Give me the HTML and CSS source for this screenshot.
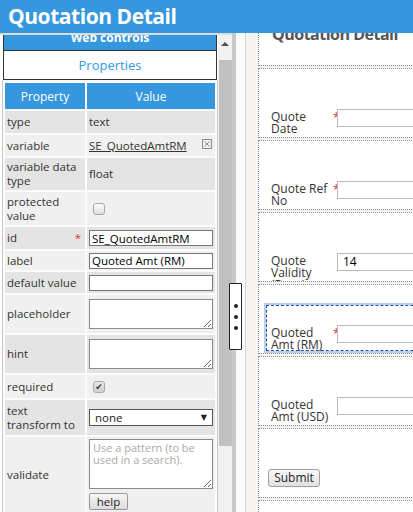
FILE: index.html
```html
<!DOCTYPE html>
<html>
<head>
<meta charset="utf-8">
<title>Quotation Detail</title>
<link rel="stylesheet" href="styles.css">
</head>
<body>
<header class="topbar">Quotation Detail</header>
<div class="main">
  <aside class="left">
    <div class="left-content">
      <div class="webctl">Web controls</div>
      <div class="props-tab">Properties</div>
      <div class="table-wrap">
        <table class="props">
          <colgroup><col class="c1"><col class="c2"></colgroup>
          <tr class="head"><th>Property</th><th>Value</th></tr>
          <tr class="d r-type"><td>type</td><td>text</td></tr>
          <tr class="l r-var"><td>variable</td><td><div class="var"><a class="link">SE_QuotedAmtRM</a><svg class="xicon" width="10" height="10" viewBox="0 0 10 10"><rect x="0.5" y="0.5" width="9" height="9" fill="none" stroke="#8a8a8a"/><path d="M2.5 2.5L7.5 7.5M7.5 2.5L2.5 7.5" stroke="#8a8a8a" fill="none"/></svg></div></td></tr>
          <tr class="d r-vdt"><td>variable data type</td><td>float</td></tr>
          <tr class="l r-prot"><td>protected value</td><td><span class="cb"></span></td></tr>
          <tr class="d r-id"><td><span class="star">*</span>id</td><td><input class="tin" type="text" value="SE_QuotedAmtRM"></td></tr>
          <tr class="l r-label"><td>label</td><td><input class="tin" type="text" value="Quoted Amt (RM)"></td></tr>
          <tr class="d r-def"><td>default value</td><td><input class="tin" type="text" value=""></td></tr>
          <tr class="l r-ph"><td>placeholder</td><td><textarea class="ta"></textarea></td></tr>
          <tr class="d r-hint"><td>hint</td><td><textarea class="ta"></textarea></td></tr>
          <tr class="l r-req"><td>required</td><td><span class="cb on">&#10004;</span></td></tr>
          <tr class="d r-tt"><td>text transform to</td><td><div class="sel"><span>none</span><span class="arr">&#9660;</span></div></td></tr>
          <tr class="l r-val"><td>validate</td><td class="valcell"><textarea class="ta big" placeholder="Use a pattern (to be used in a search)."></textarea><div class="help">help</div></td></tr>
        </table>
      </div>
    </div>
    <div class="vscroll"><div class="arrow-area"><span class="arrow"></span></div><div class="thumb"></div></div>
  </aside>
  <div class="splitter">
    <div class="handle"><i></i><i></i><i></i></div>
  </div>
  <section class="right">
    <div class="form">
      <div class="sec title-sec"><h2>Quotation Detail</h2></div>
      <div class="sec"><div class="fld"><label>Quote Date</label><span class="req">*</span><div class="fi"></div></div></div>
      <div class="sec"><div class="fld"><label>Quote Ref No</label><span class="req">*</span><div class="fi"></div></div></div>
      <div class="sec"><div class="fld"><label>Quote Validity (Days)</label><span class="req"></span><div class="fi">14</div></div></div>
      <div class="sec"><div class="fld selected"><label>Quoted Amt (RM)</label><span class="req">*</span><div class="fi"></div></div></div>
      <div class="sec"><div class="fld"><label>Quoted Amt (USD)</label><span class="req"></span><div class="fi"></div></div></div>
      <div class="sec"><div class="btn">Submit</div></div>
      <div class="sec"></div>
    </div>
  </section>
</div>
</body>
</html>
```
FILE: styles.css
```css
* { box-sizing: border-box; }
html, body { margin: 0; padding: 0; }
body {
  width: 413px;
  height: 512px;
  overflow: hidden;
  font-family: "Open Sans", "Liberation Sans", sans-serif;
  color: #333;
  background: #fff;
}
.topbar {
  position: relative;
  z-index: 2;
  height: 33px;
  background: #3597dd;
  color: #fff;
  font-weight: 700;
  font-size: 21px;
  letter-spacing: -0.45px;
  line-height: 33px;
  padding-left: 8px;
}
.main {
  display: flex;
  height: 479px;
  overflow: hidden;
}
/* left panel */
.left {
  display: flex;
  width: 232px;
  flex: none;
  border-top: 2px solid #dcdcdc;
}
.left-content {
  width: 218px;
  overflow: hidden;
}
.webctl {
  margin: -10px 0 0 3px;
  width: 214px;
  height: 26px;
  background: #3597dd;
  border: 1px solid #333;
  border-top: none;
  color: #fff;
  font-weight: 700;
  font-size: 12px;
  line-height: 26px;
  text-align: center;
}
.props-tab {
  margin-left: 3px;
  width: 214px;
  height: 29px;
  border: 1px solid #333;
  border-top: none;
  background: #fff;
  color: #3597dd;
  font-size: 13px;
  line-height: 28px;
  text-align: center;
}
.table-wrap {
  margin-left: 2px;
  width: 216px;
  border-left: 1px solid #c8c8c8;
  border-right: 1px solid #c8c8c8;
  padding-top: 1px;
  background: #fbfbfb;
}
table.props {
  border-collapse: separate;
  border-spacing: 2px;
  width: 214px;
  table-layout: fixed;
  font-size: 11.5px;
  color: #333;
}
col.c1 { width: 80px; }
col.c2 { width: 128px; }
.props th {
  background: #3597dd;
  color: #fff;
  font-weight: 400;
  font-size: 12px;
  height: 26px;
  padding: 0;
}
.props td {
  padding: 0 0 0 2px;
  vertical-align: middle;
  line-height: 14px;
}
.props td:first-child { padding-right: 4px; }
.props tr.d td { background: #e4e4e4; }
.props tr.l td { background: #f0f0f0; }
.r-type td { height: 22px; }
.r-var td { height: 21px; }
.r-vdt td { height: 32px; }
.r-prot td { height: 33px; }
.r-id td { height: 22px; }
.r-label td { height: 19px; }
.r-def td { height: 21px; }
.r-ph td { height: 38px; }
.r-hint td { height: 38px; }
.r-req td { height: 23px; }
.r-tt td { height: 35px; }
.props td.valcell { padding-top: 2px; padding-bottom: 2px; }
.star {
  float: right;
  color: #e8303a;
  margin-right: 0;
}
.var {
  display: flex;
  justify-content: space-between;
  align-items: center;
  padding-right: 3px;
}
.link {
  color: #333;
  text-decoration: underline;
}
.xicon { display: block; margin-top: -4px; }
.tin {
  display: block;
  width: 124px;
  height: 16px;
  margin: 0;
  border: 1px solid #777;
  padding: 0 2px;
  font-family: "Open Sans", sans-serif;
  font-size: 11.5px;
  line-height: 14px;
  color: #000;
  background: #fff;
  outline: none;
}
.ta {
  display: block;
  width: 124px;
  height: 30px;
  margin: 0;
  border: 1px solid #8a8a8a;
  padding: 2px 3px;
  font-family: "Open Sans", sans-serif;
  font-size: 11px;
  line-height: 12px;
  background: #fff;
}
.ta.big { height: 50px; }
.ta::placeholder { color: #a9a9a9; }
.help {
  margin-top: 4px;
  width: 39px;
  height: 17px;
  border: 1px solid #999;
  border-radius: 2px;
  background: linear-gradient(#f7f7f7, #dcdcdc);
  font-size: 11.5px;
  line-height: 15px;
  text-align: center;
  color: #222;
}
.cb {
  display: inline-block;
  width: 12px;
  height: 12px;
  margin-left: 4px;
  border: 1px solid #a8a8a8;
  border-radius: 3px;
  background: linear-gradient(#fdfdfd, #dedede);
  vertical-align: middle;
  font-family: "DejaVu Sans", sans-serif;
  font-size: 9px;
  line-height: 10px;
  text-align: center;
  color: #333;
}
.cb.on { background: linear-gradient(#e8e8e8, #cfcfcf); }
.sel {
  display: flex;
  justify-content: space-between;
  align-items: center;
  width: 124px;
  height: 17px;
  border: 1px solid #555;
  background: #fff;
  padding: 0 5px;
  font-size: 11.5px;
  color: #222;
}
.arr { font-family: "DejaVu Sans", sans-serif; font-size: 8px; }
/* scrollbar */
.vscroll {
  width: 14px;
  background: #f1f1f1;
}
.arrow-area {
  height: 25px;
  display: flex;
  justify-content: center;
  padding-top: 7px;
}
.arrow {
  width: 0;
  height: 0;
  border-left: 4px solid transparent;
  border-right: 4px solid transparent;
  border-bottom: 4px solid #505050;
}
.thumb {
  margin-left: 1px;
  width: 13px;
  height: 386px;
  background: #c1c1c1;
}
/* splitter */
.splitter {
  position: relative;
  width: 14px;
  flex: none;
  border-left: 4px solid #c9c9c9;
  border-right: 1px solid #d6d6d6;
  background: #fcfcfc;
}
.handle {
  position: absolute;
  left: -7px;
  top: 250px;
  z-index: 3;
  width: 13px;
  height: 67px;
  border: 1px solid #222;
  border-radius: 1px;
  background: #fff;
  display: flex;
  flex-direction: column;
  align-items: center;
  justify-content: center;
  gap: 7px;
}
.handle i {
  display: block;
  width: 4px;
  height: 4px;
  border-radius: 50%;
  background: #222;
}
/* right panel */
.right {
  flex: 1;
  background: #f5f4f2;
  padding-left: 12px;
  overflow: hidden;
}
.form {
  width: 420px;
  margin-top: -37px;
}
.sec {
  height: 70px;
  border: 1px dotted #8a8a8a;
  background: #fff;
  margin-bottom: 2px;
  overflow: hidden;
  padding-top: 20px;
}
.title-sec { padding-top: 0; }
.title-sec h2 {
  margin: 0;
  padding: 27px 0 0 13px;
  font-size: 16px;
  font-weight: 700;
  letter-spacing: -0.5px;
  line-height: 20px;
  color: #555;
}
.fld {
  display: flex;
  margin-left: 7px;
  height: 46px;
  border: 1px solid transparent;
  padding: 19px 0 0 4px;
}
.fld.selected {
  border: 1px dashed #24508f;
  outline: 2px solid #b3cff5;
}
.fld label {
  flex: none;
  width: 62px;
  padding-top: 2px;
  font-size: 12px;
  line-height: 12px;
  color: #333;
}
.req {
  flex: none;
  width: 4px;
  color: #e8303a;
  font-size: 12px;
  line-height: 12px;
  padding-top: 3px;
}
.fi {
  flex: none;
  width: 120px;
  height: 18px;
  border: 1px solid #bbb;
  background: #fff;
  padding-left: 5px;
  font-size: 12px;
  line-height: 16px;
  color: #000;
}
.btn {
  margin: 20px 0 0 9px;
  width: 52px;
  height: 18px;
  border: 1px solid #a0a0a0;
  border-radius: 3px;
  background: linear-gradient(#f8f8f8, #e0e0e0);
  font-size: 12px;
  line-height: 16px;
  text-align: center;
  color: #222;
}
```
